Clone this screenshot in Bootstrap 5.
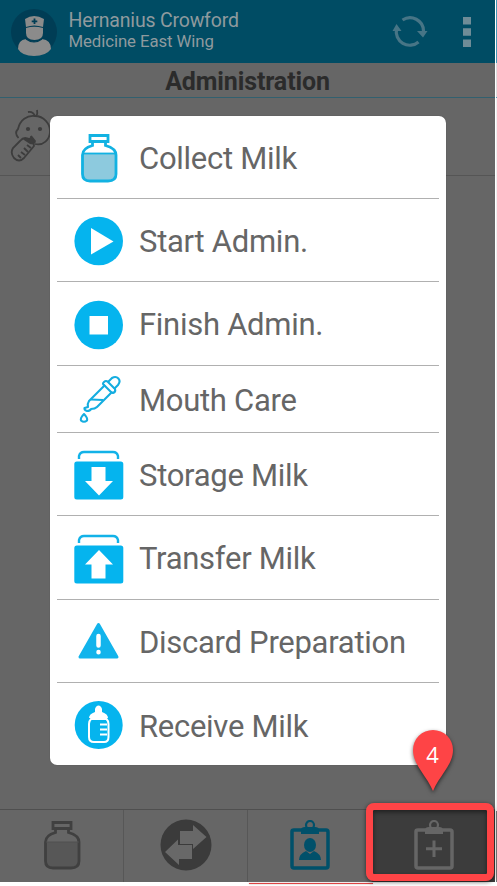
<!DOCTYPE html>
<html lang="en">
<head>
<meta charset="utf-8">
<meta name="viewport" content="width=device-width, initial-scale=1">
<title>Administration</title>
<link href="https://cdn.jsdelivr.net/npm/bootstrap@5.3.0/dist/css/bootstrap.min.css" rel="stylesheet">
<style>
body{font-family:Roboto,"Liberation Sans",sans-serif;background:#fff;width:497px;height:886px;overflow:hidden}
svg{display:block;flex:none}
.screen{width:495px;height:882px;background:#666}
.topbar{height:63px;background:#004c64;color:#8f9a9e;padding-left:11px}
.who{margin-left:11.5px;line-height:1;padding-bottom:3px}
.who-name{font-size:19.5px;line-height:23px;letter-spacing:-.19px}
.who-ward{font-size:16.8px;line-height:19px;letter-spacing:-.09px}
.more{margin-left:34px;margin-right:24px}
.heading{height:35px;border-bottom:1px solid #32606f;font-size:25px;line-height:37px;color:#2b2b2b;letter-spacing:-.12px}
.patient{height:78px;border-bottom:1px solid #555;padding:10px 0 0 10px}
.tabs{height:73px;border-top:1px solid #4f4f4f}
.tab{width:124px;border-right:1px solid #575757;padding-bottom:2px}
.tab-on{width:123px;background:#3c3c3c;border:0}
.menu{left:50px;top:116px;width:396px;height:649px;border-radius:7px;padding:0 7px;box-shadow:0 0 1px #444}
.entry{height:83.5px;border-bottom:1px solid #b0b0b0;padding:2px 0 0 17px;gap:15px;font-size:31px;color:#666;white-space:nowrap;letter-spacing:-.28px}
.entry span{padding-top:2px}
.entry:first-child{height:82.8px}
.entry-short{height:67px}
.entry:last-child{border:0}
.frame{left:366px;top:803px;width:128px;height:78px;border:7px solid #fe4446;border-radius:8px;box-shadow:0 1px 4px rgba(0,0,0,.6),inset 0 2px 5px rgba(0,0,0,.5)}
.pin{left:407px;top:724px}
.edge{left:496px;top:0;width:1px;height:882px;background:linear-gradient(#4298b4 0 63px,#ddd 63px 97px,#4f9cb5 97px 98px,#eee 98px 811px,#777 811px)}
.underline{left:249px;top:883px;width:124px;height:1px;background:#d44;box-shadow:0 0 2px #b99}
</style>
</head>
<body class="position-relative">
<svg width="0" height="0" class="position-absolute"><defs>
<g id="jar"><path d="M16 2.500H34V8.500H16Z" fill="none" stroke-width="2.800"/><path d="M18.500 9V12.500C13 14 8.500 16 8.500 22V41Q8.500 48 16 48H34Q42 48 42 41V22C42 16 37 14 31.500 12.500V9" fill="none" stroke-width="2.800"/></g>
<g id="board"><path d="M7 11.500Q7 10 9 10H41Q43 10 43 12V46Q43 48 41 48H9Q7 48 7 46Z" fill="none" stroke-width="3.500"/><path d="M16 14V10Q16 7 20 7H30Q34 7 34 10V14Z" stroke="none"/><circle cx="25" cy="5" r="4" fill="none" stroke-width="2.200"/></g>
</defs></svg>

<main class="screen d-flex flex-column">
  <header class="topbar d-flex align-items-center">
    <svg width="46" height="50" viewBox="0 0 46 50"><circle cx="23" cy="25" r="23" fill="#003d55"/><g fill="#8b8b8b"><path d="M14 12Q23 6 33 12L32 20Q23 17 15 20Z"/><path d="M15 21Q23 18.500 32 21V26Q32 33 23.500 33Q15 33 15 26Z"/><path d="M15 32Q23 38 31 32Q40 33 40 42Q35 49 23 49Q11 49 7 42Q7 33 15 32Z"/></g><path d="M15 32Q23 38 31 32" fill="none" stroke="#003d55" stroke-width="1.200"/><path d="M23.500 11.500V17M20.700 14.300H26.300" stroke="#003d55" stroke-width="1.800"/></svg>
    <div class="who"><div class="who-name">Hernanius Crowford</div><div class="who-ward">Medicine East Wing</div></div>
    <div class="ms-auto d-flex align-items-center">
      <svg width="38" height="34" viewBox="0 0 38 34"><g fill="none" stroke="#477586" stroke-width="3.200"><path d="M11.500 5A13.500 13.500 0 0 1 32.500 16"/><path d="M27.500 27A13.500 13.500 0 0 1 5.500 14"/></g><path d="M26 16H36.500L32 22.500ZM1.500 16L5.500 9L10.500 16Z" fill="#477586"/></svg>
      <svg class="more" width="8" height="30" viewBox="0 0 8 30" fill="#6f8c97"><path d="M0 0H8V7.500H0ZM0 11.200H8V18.700H0ZM0 22.400H8V30H0Z"/></svg>
    </div>
  </header>
  <h1 class="heading fw-bold text-center m-0">Administration</h1>
  <div class="patient">
    <svg width="44" height="58" viewBox="0 0 44 58" fill="none" stroke="#3d3d3d" stroke-width="1.800"><path d="M8.500 30Q4 25 8 21C10 12 17 7 25 8C34 8 40 16 40 23C40 32 33 38 25 36"/><path d="M18 4Q23 3 25 8Q28 8 27 2"/><circle cx="18" cy="21" r="1.200" fill="#3d3d3d"/><circle cx="30" cy="21" r="1.200" fill="#3d3d3d"/><path d="M10 33L3 40Q0 45 4 50Q9 55 14 50L24 38Q24 35 21 33Q15 27 10 33Z"/><path d="M14 31Q22 32 21 28L25 33Q25 36 20 35Z" fill="#3d3d3d"/><path d="M11 44L15 47M14 40L18 44M17 37L21 40M8 47L11 50"/></svg>
  </div>
  <nav class="tabs d-flex mt-auto">
    <div class="tab d-flex align-items-center justify-content-center"><svg width="50" height="50" viewBox="0 0 50 50" stroke="#404040"><path d="M9 22H41V41Q41 47 34 47H16Q9 47 9 41Z" fill="#575757" stroke="none"/><use href="#jar"/><path d="M9 22H42" stroke="#505050"/></svg></div>
    <div class="tab d-flex align-items-center justify-content-center"><svg width="52" height="52" viewBox="0 0 52 52"><circle cx="26" cy="26" r="25.500" fill="#3b3b3b"/><path d="M20 12H33V6L46.500 18L33 30V25H20ZM32 26V40H19V46L5 33L18 20.500V26Z" fill="#686868"/></svg></div>
    <div class="tab d-flex align-items-center justify-content-center"><svg width="50" height="50" viewBox="0 0 50 50" fill="#00506a" stroke="#00506a"><use href="#board"/><ellipse cx="25" cy="25" rx="6" ry="7" stroke="none"/><path d="M14 40Q14 34 21 31L25 34L29 31Q36 34 36 40Z" stroke="none"/></svg></div>
    <div class="tab tab-on d-flex align-items-center justify-content-center"><svg width="50" height="50" viewBox="0 0 50 50" fill="#666" stroke="#666"><use href="#board"/><path d="M25 20.500V37M17 28.700H33" stroke-width="3"/></svg></div>
  </nav>
</main>

<section class="menu position-absolute bg-white">
  <div class="entry d-flex align-items-center"><svg width="50" height="50" viewBox="0 0 50 50" stroke="#12b2e2"><path d="M9 20.500H41V41Q41 47 34 47H16Q9 47 9 41Z" fill="#8dcade" stroke="none"/><use href="#jar"/><path d="M9 20.500H41" stroke-width="1.800"/></svg><span>Collect Milk</span></div>
  <div class="entry d-flex align-items-center"><svg width="50" height="50" viewBox="0 0 50 50"><circle cx="24.700" cy="25" r="24.300" fill="#05b4ee"/><path d="M17 12V38.500L39.500 25.500Z" fill="#fff"/></svg><span>Start Admin.</span></div>
  <div class="entry d-flex align-items-center"><svg width="50" height="50" viewBox="0 0 50 50"><circle cx="24.700" cy="25" r="24.300" fill="#05b4ee"/><path d="M15.500 16H34V34.500H15.500Z" fill="#fff"/></svg><span>Finish Admin.</span></div>
  <div class="entry entry-short d-flex align-items-center"><svg width="50" height="50" viewBox="0 0 50 50" fill="none" stroke="#14ade0" stroke-width="2.100" stroke-linejoin="round"><path d="M34 7L38 3C43 0 48 5 44 10L40 14"/><path d="M30 7Q32 5 34 7L41 14Q42 17 39 18L37 17L30 10Q28 9 30 7Z"/><path d="M31 10L15 26Q13 29 14 32L10.500 33Q10 35 13 36Q16 36 17 34Q21 34 23 32L38 17"/><path d="M17 24.500L29 25"/><path d="M10 39Q6 43 7 45.500Q10 48 13 45.500Q14 43 10 39Z"/></svg><span>Mouth Care</span></div>
  <div class="entry d-flex align-items-center"><svg width="50" height="50" viewBox="0 0 50 50"><path d="M5 9V6Q6 2 10 2H39Q43 2 44 6V9" fill="none" stroke="#12b2e8" stroke-width="2.400"/><rect x=".3" y="11.500" width="49" height="38" rx="2.500" fill="#05b4ee"/><path d="M17.500 17H31.500V31H39L25 45.500L11 31H17.500Z" fill="#fff"/></svg><span>Storage Milk</span></div>
  <div class="entry d-flex align-items-center"><svg width="50" height="50" viewBox="0 0 50 50"><path d="M5 9V6Q6 2 10 2H39Q43 2 44 6V9" fill="none" stroke="#12b2e8" stroke-width="2.400"/><rect x=".3" y="11.500" width="49" height="38" rx="2.500" fill="#05b4ee"/><path d="M17.500 44.500H31.500V30.500H39L25 16L11 30.500H17.500Z" fill="#fff"/></svg><span>Transfer Milk</span></div>
  <div class="entry d-flex align-items-center"><svg width="50" height="50" viewBox="0 0 50 50"><path d="M24.500 7.500L43 40H6Z" fill="#12b4ec" stroke="#12b4ec" stroke-width="3" stroke-linejoin="round"/><path d="M24.500 19V28.500M24.500 35V35.200" stroke="#fff" stroke-width="4.500" stroke-linecap="round"/></svg><span>Discard Preparation</span></div>
  <div class="entry d-flex align-items-center"><svg width="50" height="50" viewBox="0 0 50 50"><circle cx="24.700" cy="24" r="24" fill="#05b4ee"/><g transform="translate(0 -1)"><path d="M15 18Q15 14 21 12V9Q22 5.500 24.500 5.500T28 9V12Q34 14 34 18Z" fill="#fff"/><path d="M17 19Q15 21 15 24V37Q15 42 20 42H30Q34.500 42 34.500 37V24Q34.500 21 32.500 19Z" fill="none" stroke="#fff" stroke-width="2"/><path d="M26 24.500H33M26 29.500H33M26 34.500H33" stroke="#fff" stroke-width="2"/></g></svg><span>Receive Milk</span></div>
</section>

<div class="edge position-absolute"></div>
<div class="underline position-absolute"></div>
<div class="frame position-absolute"></div>
<svg class="pin position-absolute" width="52" height="74" viewBox="0 0 52 74"><path d="M26 67C20 52 6 41 6 26A20 20 0 0 1 46 26C46 41 32 52 26 67Z" fill="#fe4446" style="filter:drop-shadow(0 2px 2px #0009)"/><text x="25.500" y="38.500" text-anchor="middle" font-family="Open Sans, sans-serif" font-size="22" fill="#fff">4</text></svg>
</body>
</html>
